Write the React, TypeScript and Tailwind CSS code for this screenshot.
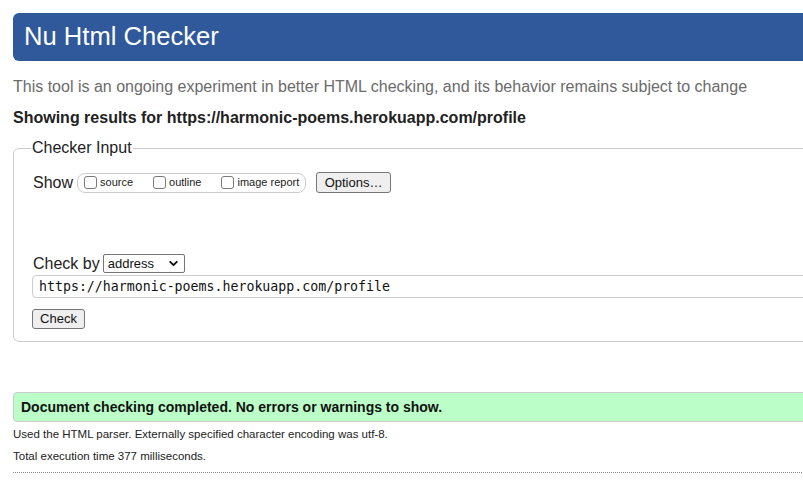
import { ChevronDown } from 'lucide-react'

const sans = "font-['Liberation_Sans',Arial,sans-serif]"

function Box({ label }: { label: string }) {
  return (
    <label className="flex items-center gap-[3px]">
      <span className="w-[13px] h-[13px] rounded-[3px] border border-[#7a7a7a] bg-white" />
      <span className="text-[11px] text-[#222]">{label}</span>
    </label>
  )
}

export default function App() {
  return (
    <div className={`w-full h-[490px] overflow-hidden bg-white ${sans}`}>
      <div className="w-[860px] pl-[13px] pt-[13px]">
        {/* title bar */}
        <div className="h-[48px] rounded-l-[6px] bg-[#30599b] flex items-center pl-[11px]">
          <h1 className="text-[25.6px] leading-none text-white">Nu Html Checker</h1>
        </div>

        <p className="mt-[17px] text-[16px] leading-[18px] text-[#6b6b6b]">
          This tool is an ongoing experiment in better HTML checking, and its behavior remains subject to change
        </p>
        <p className="mt-[13px] text-[16px] leading-[18px] font-bold text-[#222]">
          Showing results for https://harmonic-poems.herokuapp.com/profile
        </p>

        <fieldset className="mt-[12px] border border-[#cccccc] rounded-l-[6px] pl-[18px] pb-[12px]">
          <legend className="ml-[-1px] px-[1px] text-[16px] leading-[18px] text-[#222]">Checker Input</legend>

          <div className="mt-[15px] flex items-center h-[21px]">
            <span className="text-[16px] leading-[18px] text-[#222] mr-[4px] ml-[1px]">Show</span>
            <div className="flex items-center h-[20px] w-[229px] border border-[#cccccc] rounded-[8px] pl-[6px] gap-[20px]">
              <Box label="source" />
              <Box label="outline" />
              <Box label="image report" />
            </div>
            <button className="ml-[10px] h-[21px] w-[75px] border border-[#767676] rounded-[3px] bg-[#efefef] text-[13px] text-[#111]">
              Options…
            </button>
          </div>

          <div className="mt-[61px] flex items-center h-[19px]">
            <span className="text-[16px] leading-[18px] text-[#222] ml-[1px] mr-[3px]">Check by</span>
            <div className="h-[19px] w-[82px] border border-[#767676] rounded-[2px] bg-white flex items-center justify-between pl-[4px] pr-[4px]">
              <span className="text-[13px] text-[#111]">address</span>
              <ChevronDown size={13} strokeWidth={3.5} className="text-[#111]" />
            </div>
          </div>

          <div className="mt-[2px] h-[23px] border border-[#cccccc] rounded-l-[4px] flex items-center pl-[6px]">
            <span className="font-['DejaVu_Sans_Mono',monospace] text-[13.25px] text-[#111]">
              https://harmonic-poems.herokuapp.com/profile
            </span>
          </div>

          <button className="mt-[11px] h-[20px] w-[53px] border border-[#767676] rounded-[3px] bg-[#efefef] text-[13px] text-[#111] flex items-center justify-center">
            Check
          </button>
        </fieldset>

        <div className="mt-[50px] h-[30px] border border-[#cccccc] rounded-l-[4px] bg-[#bcfec8] flex items-center pl-[7px]">
          <span className="text-[14px] font-bold text-[#111]">
            Document checking completed. No errors or warnings to show.
          </span>
        </div>

        <p className="mt-[6px] text-[11.5px] leading-[13px] text-[#222]">
          Used the HTML parser. Externally specified character encoding was utf-8.
        </p>
        <p className="mt-[9px] text-[11.5px] leading-[13px] text-[#222]">Total execution time 377 milliseconds.</p>
        <div className="mt-[9px] border-t border-dotted border-[#888]" />
      </div>
    </div>
  )
}
